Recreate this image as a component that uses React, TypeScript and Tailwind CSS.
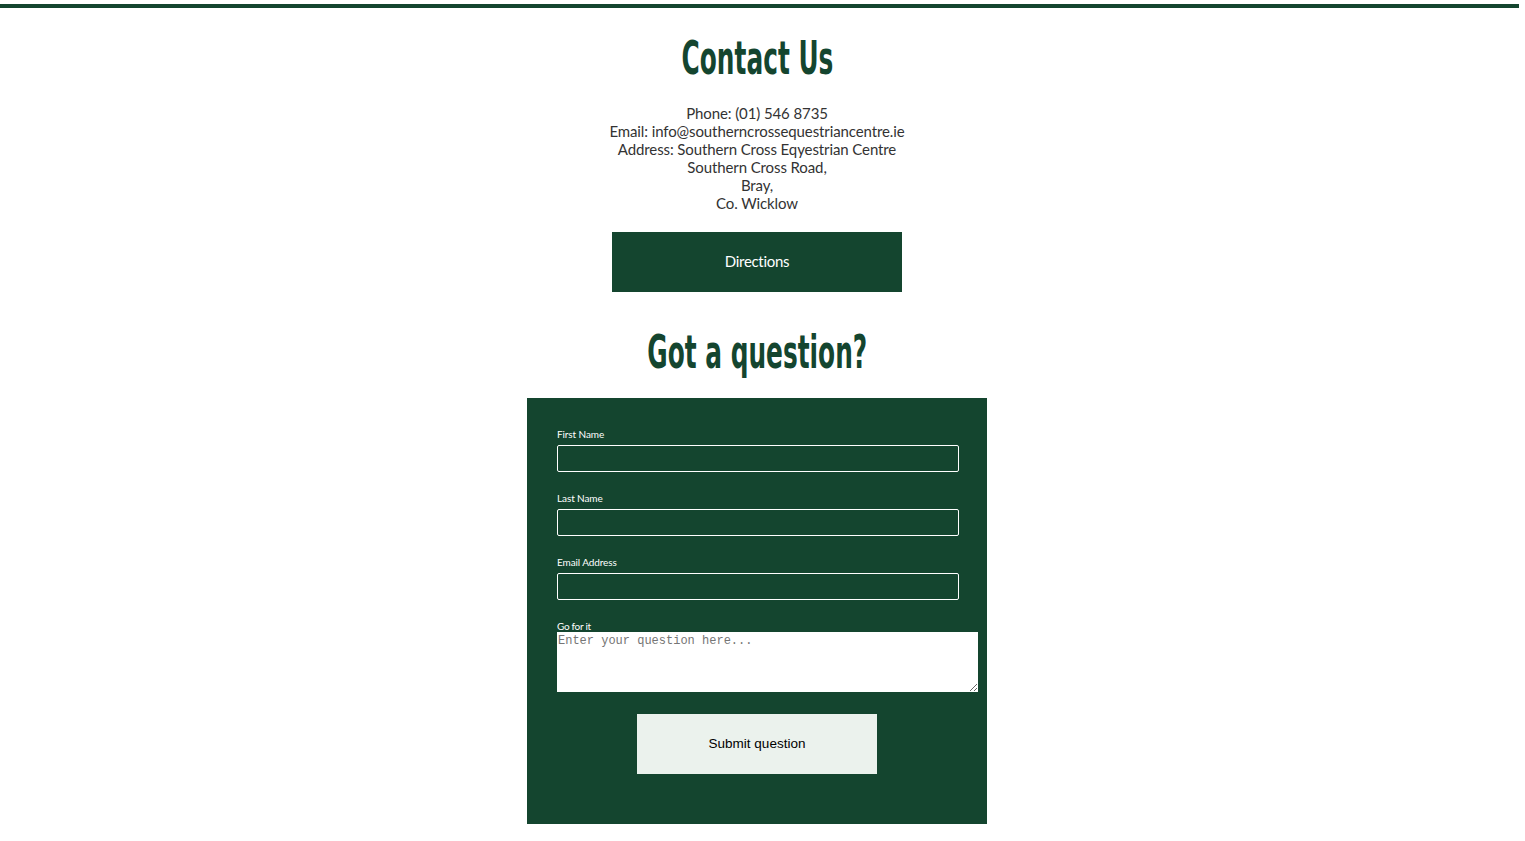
import { useState } from "react";

const green = "bg-[#14452f]";

const Field = ({ label, type = "text" }: { label: string; type?: string }) => (
  <div className="mb-[20px] flex flex-col">
    <label className="mb-[5px] font-['Lato',sans-serif] text-[10px] leading-[12px] tracking-[-0.1px] text-white">
      {label}
    </label>
    <input
      type={type}
      className="h-[27px] w-[402px] rounded-[2px] border border-white bg-transparent px-2 text-[13px] text-white outline-none"
    />
  </div>
);

export default function App() {
  const [question, setQuestion] = useState("");

  return (
    <div className="min-h-[841px] w-[1519px] bg-white">
      <div className={`mt-[4px] h-[4px] w-full ${green}`} />
      <div className="flex w-[1514px] flex-col items-center">
        <h1 className="mt-[24px] h-[52px] origin-center scale-x-[0.6] whitespace-nowrap font-['DejaVu_Sans_Condensed','DejaVu_Sans',sans-serif] text-[46px] font-bold leading-[52px] text-[#14452f]">
          Contact Us
        </h1>
        <div className="mt-[20px] text-center font-['Lato',sans-serif] text-[15px] leading-[18px] tracking-[-0.1px] text-[#333333]">
          <p>Phone: (01) 546 8735</p>
          <p>Email: info@southerncrossequestriancentre.ie</p>
          <p>Address: Southern Cross Eqyestrian Centre</p>
          <p>Southern Cross Road,</p>
          <p>Bray,</p>
          <p>Co. Wicklow</p>
        </div>
        <button
          className={`mt-[20px] h-[60px] w-[290px] ${green} pb-[1px] font-['Lato',sans-serif] text-[15px] tracking-[-0.3px] text-white`}
        >
          Directions
        </button>
        <h2 className="mt-[34px] h-[52px] origin-center scale-x-[0.6] whitespace-nowrap font-['DejaVu_Sans_Condensed','DejaVu_Sans',sans-serif] text-[46px] font-bold leading-[52px] text-[#14452f]">
          Got a question?
        </h2>
        <form
          className={`mt-[20px] flex h-[426px] w-[460px] flex-col ${green} px-[30px] pt-[30px]`}
          onSubmit={(e) => e.preventDefault()}
        >
          <Field label="First Name" />
          <Field label="Last Name" />
          <Field label="Email Address" type="email" />
          <label className="mt-[1px] font-['Lato',sans-serif] text-[10px] leading-[11px] tracking-[-0.3px] text-white">
            Go for it
          </label>
          <textarea
            value={question}
            onChange={(e) => setQuestion(e.target.value)}
            placeholder="Enter your question here..."
            className="h-[60px] w-[421px] bg-white px-[1px] pt-[2px] font-['Liberation_Mono',monospace] text-[12px] leading-[14px] text-black placeholder:text-[#757575] outline-none"
          />
          <button
            type="submit"
            className="mx-auto mt-[22px] h-[60px] w-[240px] bg-[#ebf2ed] pt-[1px] font-['Liberation_Sans',Arial,sans-serif] text-[13.5px] text-black"
          >
            Submit question
          </button>
        </form>
      </div>
    </div>
  );
}
